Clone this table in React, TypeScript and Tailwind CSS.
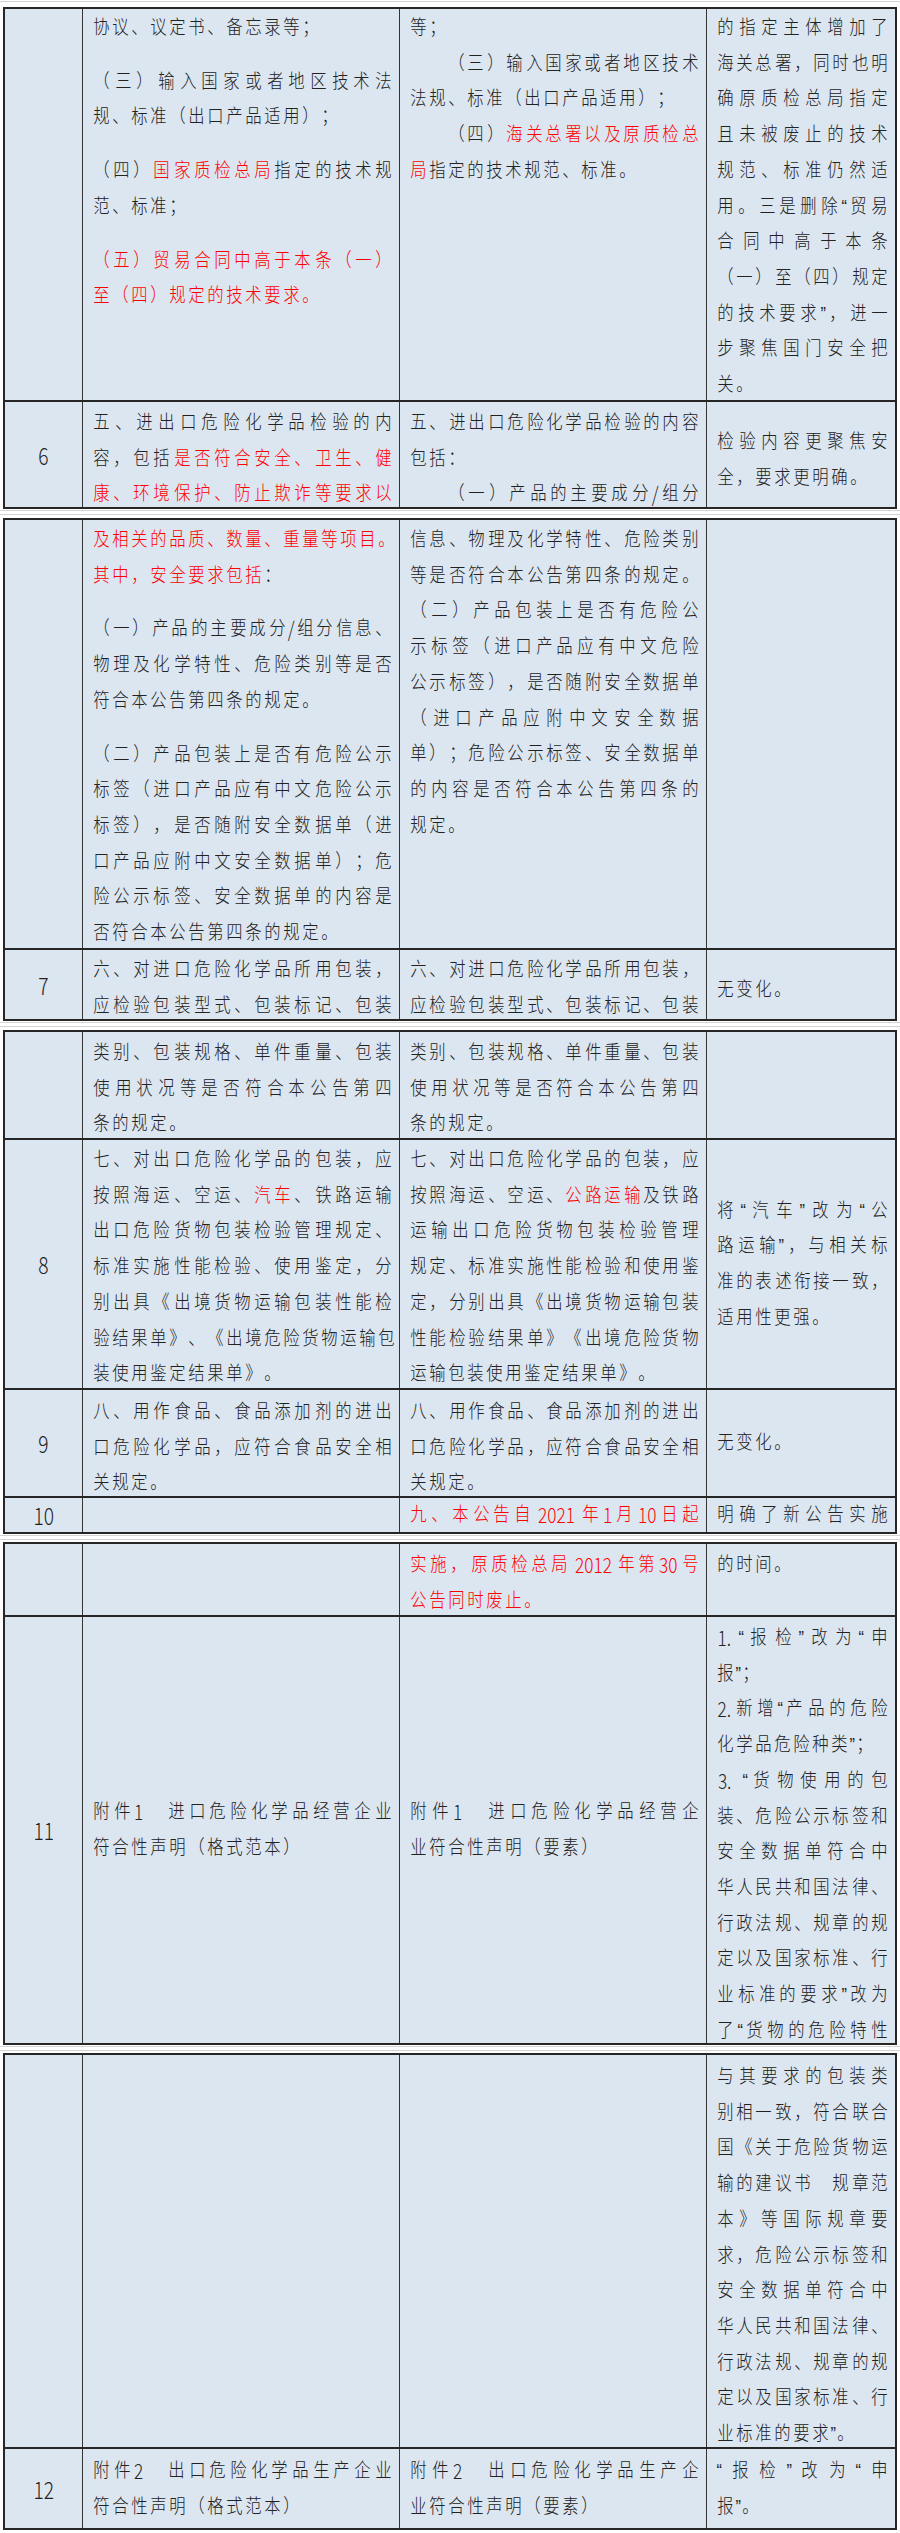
type CellDef = { lines?: string[]; pt?: string; center?: boolean };
type RowDef = { h: string; num?: string; c2?: CellDef; c3?: CellDef; c4?: CellDef };

// line prefixes: "*" = justified line, "^" = first-line indent, "" = paragraph gap
// red text is wrapped in [[...]]
const RED_SPLIT = /(\[\[.+?\]\])/;

function tokenize(s: string): string[] {
  return s.match(/[ -~]+|[^ -~]/g) ?? [];
}

function TextLine({ src }: { src: string }) {
  if (src === '') return <div className="h-[18px] shrink-0" />;
  let s = src;
  let justify = false;
  let indent = false;
  while (s.startsWith('*') || s.startsWith('^')) {
    if (s[0] === '*') justify = true;
    else indent = true;
    s = s.slice(1);
  }
  const toks: { t: string; red: boolean }[] = [];
  s.split(RED_SPLIT)
    .filter(Boolean)
    .forEach((p) => {
      const red = p.startsWith('[[');
      const txt = red ? p.slice(2, -2) : p;
      tokenize(txt).forEach((t) => toks.push({ t, red }));
    });

  return (
    <div className={`flex shrink-0 whitespace-nowrap ${justify ? 'justify-between' : ''} ${indent ? 'pl-[38px]' : ''}`}>
      {toks.map((k, i) => {
        const ascii = /^[ -~]+$/.test(k.t);
        return (
          <span
            key={i}
            className={`${k.red ? 'text-[#ff0000]' : ''} ${
              ascii
                ? "whitespace-pre text-[21px] [font-family:'Noto_Sans_CJK_SC',sans-serif] [transform:scaleX(0.82)]"
                : '[transform:scaleX(0.86)]'
            }`}
          >
            {k.t}
          </span>
        );
      })}
    </div>
  );
}

function TextCell({ w, def }: { w: string; def?: CellDef }) {
  return (
    <div
      className={`${w} h-full overflow-hidden pl-[9px] pr-[6px] flex flex-col ${
        def?.center ? 'justify-center' : def?.pt ?? ''
      }`}
    >
      {def?.lines?.map((l, i) => <TextLine key={i} src={l} />)}
    </div>
  );
}

function Row({ row, first }: { row: RowDef; first: boolean }) {
  return (
    <div className={`flex ${row.h} ${first ? '' : 'border-t-2 border-[#262626]'}`}>
      <div className="w-[77px] shrink-0 h-full flex items-center justify-center">
        {row.num && (
          <span className="text-[24px] [font-family:'Noto_Sans_CJK_SC',sans-serif] [transform:scaleX(0.8)]">
            {row.num}
          </span>
        )}
      </div>
      <TextCell w="w-[317px] shrink-0 border-l border-[#333]" def={row.c2} />
      <TextCell w="w-[307px] shrink-0 border-l border-[#333]" def={row.c3} />
      <TextCell w="flex-1 min-w-0 border-l border-[#333]" def={row.c4} />
    </div>
  );
}

function Segment({ rows }: { rows: RowDef[] }) {
  return (
    <div className="mx-[3px] border-2 border-[#262626] bg-[#dce6f1]">
      {rows.map((r, i) => (
        <Row key={i} row={r} first={i === 0} />
      ))}
    </div>
  );
}

function PageGap({ h }: { h: string }) {
  return (
    <div className={`${h} pt-[1px]`}>
      <div className="h-[5px] border-y border-[#d4d4d4]" />
    </div>
  );
}

const seg1: RowDef[] = [
  {
    h: 'h-[391px]',
    c2: {
      pt: 'pt-[1px]',
      lines: [
        '协议、议定书、备忘录等；',
        '',
        '*（三）输入国家或者地区技术法',
        '规、标准（出口产品适用）；',
        '',
        '*（四）[[国家质检总局]]指定的技术规',
        '范、标准；',
        '',
        '*[[（五）贸易合同中高于本条（一）]]',
        '[[至（四）规定的技术要求。]]',
      ],
    },
    c3: {
      pt: 'pt-[1px]',
      lines: [
        '等；',
        '^*（三）输入国家或者地区技术',
        '法规、标准（出口产品适用）；',
        '^*（四）[[海关总署以及原质检总]]',
        '[[局]]指定的技术规范、标准。',
      ],
    },
    c4: {
      pt: 'pt-[1px]',
      lines: [
        '*的指定主体增加了',
        '*海关总署，同时也明',
        '*确原质检总局指定',
        '*且未被废止的技术',
        '*规范、标准仍然适',
        '*用。三是删除“贸易',
        '*合同中高于本条',
        '*（一）至（四）规定',
        '*的技术要求”，进一',
        '*步聚焦国门安全把',
        '关。',
      ],
    },
  },
  {
    h: 'h-[107px]',
    num: '6',
    c2: {
      pt: 'pt-[3px]',
      lines: [
        '*五、进出口危险化学品检验的内',
        '*容，包括[[是否符合安全、卫生、健]]',
        '*[[康、环境保护、防止欺诈等要求以]]',
      ],
    },
    c3: {
      pt: 'pt-[3px]',
      lines: ['*五、进出口危险化学品检验的内容', '包括：', '^*（一）产品的主要成分/组分'],
    },
    c4: { pt: 'pt-[22px]', lines: ['*检验内容更聚焦安', '全，要求更明确。'] },
  },
];

const seg2: RowDef[] = [
  {
    h: 'h-[428px]',
    c2: {
      pt: 'pt-[2px]',
      lines: [
        '*[[及相关的品质、数量、重量等项目。]]',
        '[[其中，安全要求包括]]：',
        '',
        '*（一）产品的主要成分/组分信息、',
        '*物理及化学特性、危险类别等是否',
        '符合本公告第四条的规定。',
        '',
        '*（二）产品包装上是否有危险公示',
        '*标签（进口产品应有中文危险公示',
        '*标签），是否随附安全数据单（进',
        '*口产品应附中文安全数据单）；危',
        '*险公示标签、安全数据单的内容是',
        '否符合本公告第四条的规定。',
      ],
    },
    c3: {
      pt: 'pt-[2px]',
      lines: [
        '*信息、物理及化学特性、危险类别',
        '*等是否符合本公告第四条的规定。',
        '*（二）产品包装上是否有危险公',
        '*示标签（进口产品应有中文危险',
        '*公示标签），是否随附安全数据单',
        '*（进口产品应附中文安全数据',
        '*单）；危险公示标签、安全数据单',
        '*的内容是否符合本公告第四条的',
        '规定。',
      ],
    },
  },
  {
    h: 'h-[71px]',
    num: '7',
    c2: { pt: 'pt-[2px]', lines: ['*六、对进口危险化学品所用包装，', '*应检验包装型式、包装标记、包装'] },
    c3: { pt: 'pt-[2px]', lines: ['*六、对进口危险化学品所用包装，', '*应检验包装型式、包装标记、包装'] },
    c4: { pt: 'pt-[22px]', lines: ['无变化。'] },
  },
];

const seg3: RowDef[] = [
  {
    h: 'h-[106px]',
    c2: { pt: 'pt-[3px]', lines: ['*类别、包装规格、单件重量、包装', '*使用状况等是否符合本公告第四', '条的规定。'] },
    c3: { pt: 'pt-[3px]', lines: ['*类别、包装规格、单件重量、包装', '*使用状况等是否符合本公告第四', '条的规定。'] },
  },
  {
    h: 'h-[250px]',
    num: '8',
    c2: {
      pt: 'pt-[2px]',
      lines: [
        '*七、对出口危险化学品的包装，应',
        '*按照海运、空运、[[汽车]]、铁路运输',
        '*出口危险货物包装检验管理规定、',
        '*标准实施性能检验、使用鉴定，分',
        '*别出具《出境货物运输包装性能检',
        '*验结果单》、《出境危险货物运输包',
        '装使用鉴定结果单》。',
      ],
    },
    c3: {
      pt: 'pt-[2px]',
      lines: [
        '*七、对出口危险化学品的包装，应',
        '*按照海运、空运、[[公路运输]]及铁路',
        '*运输出口危险货物包装检验管理',
        '*规定、标准实施性能检验和使用鉴',
        '*定，分别出具《出境货物运输包装',
        '*性能检验结果单》《出境危险货物',
        '运输包装使用鉴定结果单》。',
      ],
    },
    c4: {
      center: true,
      lines: ['*将“汽车”改为“公', '*路运输”，与相关标', '*准的表述衔接一致，', '适用性更强。'],
    },
  },
  {
    h: 'h-[108px]',
    num: '9',
    c2: { pt: 'pt-[4px]', lines: ['*八、用作食品、食品添加剂的进出', '*口危险化学品，应符合食品安全相', '关规定。'] },
    c3: { pt: 'pt-[4px]', lines: ['*八、用作食品、食品添加剂的进出', '*口危险化学品，应符合食品安全相', '关规定。'] },
    c4: { center: true, lines: ['无变化。'] },
  },
  {
    h: 'h-[36px]',
    num: '10',
    c3: { center: true, lines: ['*[[九、本公告自2021年1月10日起]]'] },
    c4: { center: true, lines: ['*明确了新公告实施'] },
  },
];

const seg4: RowDef[] = [
  {
    h: 'h-[71px]',
    c3: { pt: 'pt-[3px]', lines: ['*[[实施，原质检总局2012年第30号]]', '[[公告同时废止。]]'] },
    c4: { pt: 'pt-[3px]', lines: ['的时间。'] },
  },
  {
    h: 'h-[428px]',
    num: '11',
    c2: { center: true, lines: ['*附件1　进口危险化学品经营企业', '符合性声明（格式范本）'] },
    c3: { center: true, lines: ['*附件1　进口危险化学品经营企', '业符合性声明（要素）'] },
    c4: {
      pt: 'pt-[3px]',
      lines: [
        '*1.“报检”改为“申',
        '报”；',
        '*2.新增“产品的危险',
        '化学品危险种类”；',
        '*3. “货物使用的包',
        '*装、危险公示标签和',
        '*安全数据单符合中',
        '*华人民共和国法律、',
        '*行政法规、规章的规',
        '*定以及国家标准、行',
        '*业标准的要求”改为',
        '*了“货物的危险特性',
      ],
    },
  },
];

const seg5: RowDef[] = [
  {
    h: 'h-[392px]',
    c4: {
      pt: 'pt-[4px]',
      lines: [
        '*与其要求的包装类',
        '*别相一致，符合联合',
        '*国《关于危险货物运',
        '*输的建议书　规章范',
        '*本》等国际规章要',
        '*求，危险公示标签和',
        '*安全数据单符合中',
        '*华人民共和国法律、',
        '*行政法规、规章的规',
        '*定以及国家标准、行',
        '业标准的要求”。',
      ],
    },
  },
  {
    h: 'h-[81px]',
    num: '12',
    c2: { center: true, lines: ['*附件2　出口危险化学品生产企业', '符合性声明（格式范本）'] },
    c3: { center: true, lines: ['*附件2　出口危险化学品生产企', '业符合性声明（要素）'] },
    c4: { center: true, lines: ['*“报检”改为“申', '报”。'] },
  },
];

export default function App() {
  return (
    <div className="w-[900px] min-h-[2533px] bg-white text-[#222] text-[19px] font-light leading-[35.7px] [font-family:'Liberation_Sans','Noto_Sans_CJK_SC',sans-serif]">
      <div className="h-[7px] pt-[1px]">
        <div className="border-t border-[#d4d4d4]" />
      </div>
      <Segment rows={seg1} />
      <PageGap h="h-[9px]" />
      <Segment rows={seg2} />
      <PageGap h="h-[9px]" />
      <Segment rows={seg3} />
      <PageGap h="h-[8px]" />
      <Segment rows={seg4} />
      <PageGap h="h-[8px]" />
      <Segment rows={seg5} />
    </div>
  );
}
